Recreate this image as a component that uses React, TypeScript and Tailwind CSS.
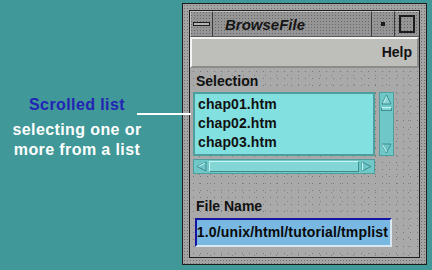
const stipple =
  "bg-[radial-gradient(circle,#777_0.6px,transparent_0.9px),radial-gradient(circle,#808080_0.6px,transparent_0.9px)] bg-[length:7px_7px,11px_9px] bg-[position:0_0,4px_3px]";

function UpArrow() {
  return (
    <svg width="11" height="11" viewBox="0 0 11 11">
      <path d="M5.5 1 L10 10 L1 10 Z" fill="#8ad6d6" stroke="#3e8e8e" strokeWidth="1" />
      <path d="M5.5 2.5 L2.5 9" stroke="#c8f4f4" strokeWidth="1" />
    </svg>
  );
}
function DownArrow() {
  return (
    <svg width="11" height="11" viewBox="0 0 11 11">
      <path d="M1 1 L10 1 L5.5 10 Z" fill="#70c6c6" stroke="#3e8e8e" strokeWidth="1" />
      <path d="M1.5 1.5 L5.5 9" stroke="#c8f4f4" strokeWidth="1" />
    </svg>
  );
}
function LeftArrow() {
  return (
    <svg width="11" height="11" viewBox="0 0 11 11">
      <path d="M1 5.5 L10 1 L10 10 Z" fill="#70c6c6" stroke="#3e8e8e" strokeWidth="1" />
      <path d="M2.5 5.5 L9 2" stroke="#c8f4f4" strokeWidth="1" />
    </svg>
  );
}
function RightArrow() {
  return (
    <svg width="11" height="11" viewBox="0 0 11 11">
      <path d="M10 5.5 L1 1 L1 10 Z" fill="#70c6c6" stroke="#3e8e8e" strokeWidth="1" />
      <path d="M1.5 1.5 L1.5 9.5" stroke="#c8f4f4" strokeWidth="1" />
    </svg>
  );
}

function Window() {
  return (
    <div className="mt-[3px] h-[262px] w-[245px] border border-[#1c1c1c] bg-[#a4a4a4] p-[6px] bg-[radial-gradient(circle,#6e6e6e_0.6px,transparent_0.9px)] bg-[length:3px_3px]">
      <div className="flex h-full flex-col border border-[#1c1c1c]">
        {/* title bar */}
        <div className="flex h-[26px] bg-[#959595] bg-[radial-gradient(circle,#686868_0.6px,transparent_0.9px)] bg-[length:3px_3px]">
          <div className="flex w-[23px] items-center justify-center border-r border-b border-t border-l border-t-[#c4c4c4] border-l-[#c4c4c4] border-b-[#5a5a5a] border-r-[#3a3a3a]">
            <div className="h-[4px] w-[17px] border border-[#1c1c1c] bg-[#b4b4b4]" />
          </div>
          <div className="flex flex-1 items-center border-t border-b border-t-[#c4c4c4] border-b-[#5a5a5a] pl-[12px] text-[15px] italic leading-none text-[#161616]">
            BrowseFile
          </div>
          <div className="flex w-[24px] items-center justify-center border border-t-[#c4c4c4] border-l-[#3a3a3a] border-b-[#5a5a5a] border-r-[#3a3a3a]">
            <div className="h-[4px] w-[4px] bg-[#1c1c1c]" />
          </div>
          <div className="flex w-[24px] items-center justify-center border-t border-b border-t-[#c4c4c4] border-b-[#5a5a5a]">
            <div className="h-[18px] w-[16px] border-2 border-[#1c1c1c]" />
          </div>
        </div>
        {/* menu bar */}
        <div className="flex h-[31px] items-center justify-end border-2 border-t-[#f4f4f2] border-l-[#f4f4f2] border-b-[#8c8c8a] border-r-[#8c8c8a] bg-[#bebfbb] pr-[5px] text-[14px] text-[#111]">
          Help
        </div>
        {/* content */}
        <div className={`flex flex-1 flex-col bg-[#a9a9a9] px-[3px] pt-[5px] ${stipple}`}>
          <div className="pl-[3px] text-[14px] leading-[16px] text-[#111]">Selection</div>
          <div className="mt-[3px] flex gap-[4px]">
            <div className="h-[64px] w-[182px] border-2 border-[#4e9e9e] bg-[#82e0e0] pl-[3px] pt-[1px] text-[14px] leading-[19px] tracking-[0.1px] text-[#111]">
              <div>chap01.htm</div>
              <div>chap02.htm</div>
              <div>chap03.htm</div>
            </div>
            <div className="flex h-[64px] w-[15px] flex-col items-center justify-between border border-[#4e9e9e] bg-[#6fc7c7] py-[1px]">
              <div className="flex flex-col items-center">
                <UpArrow />
                <div className="mt-[2px] h-[4px] w-[11px] border border-[#3e8e8e] border-t-[#c8f4f4] bg-[#82d6d6]" />
              </div>
              <DownArrow />
            </div>
          </div>
          <div className="mt-[3px] flex h-[15px] w-[182px] items-center border border-[#4e9e9e] bg-[#6fc7c7] px-[2px]">
            <LeftArrow />
            <div className="mx-[2px] h-[11px] flex-1 border border-t-[#c8f4f4] border-l-[#c8f4f4] border-b-[#3e8e8e] border-r-[#3e8e8e] bg-[#82d6d6]" />
            <RightArrow />
          </div>
          <div className="mt-[24px] pl-[3px] text-[14px] leading-[16px] text-[#111]">File Name</div>
          <div className="ml-[2px] mt-[4px] flex h-[29px] w-[197px] justify-end overflow-hidden border-2 border-t-[#1414a4] border-l-[#1414a4] border-b-[#d8e8f0] border-r-[#d8e8f0] bg-[#78b8e2] pr-[2px] text-[14px] leading-[25px] tracking-[0.15px] text-[#0a0a0a]">
            <span className="whitespace-nowrap">1.0/unix/html/tutorial/tmplist</span>
          </div>
        </div>
      </div>
    </div>
  );
}

export default function App() {
  return (
    <div className="relative flex h-[270px] w-[432px] overflow-hidden bg-[#409898] font-['Liberation_Sans',Arial,sans-serif] font-bold">
      <div className="flex w-[182px] flex-col items-center pr-[28px] pt-[95px] text-[16px] leading-[20px] tracking-[0.4px]">
        <div className="text-[#2424b4]">Scrolled list</div>
        <div className="mt-[5px] text-white">selecting one or</div>
        <div className="text-white">more from a list</div>
      </div>
      <Window />
      <div className="absolute left-[137px] top-[113px] h-[2px] w-[54px] bg-white" />
    </div>
  );
}
